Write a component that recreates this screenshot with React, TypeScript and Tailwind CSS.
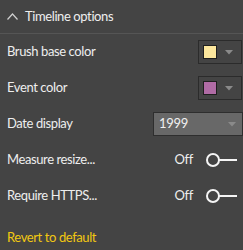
import React from "react";

const font = { fontFamily: 'Lato, "Open Sans", sans-serif' };

function Caret() {
  return (
    <svg width="8" height="5" viewBox="0 0 8 5" className="block">
      <path d="M0 0 H8 L4 4.5 Z" fill="#8a8a8a" />
    </svg>
  );
}

function ColorBox({ color }: { color: string }) {
  return (
    <div className="flex h-[24px] w-[44px] items-center border border-[#2b2b2b] pl-[4px]">
      <div className="h-[14px] w-[14px] border border-[#1e1e1e]" style={{ backgroundColor: color }} />
      <div className="ml-[8px]">
        <Caret />
      </div>
    </div>
  );
}

function Toggle() {
  return (
    <div className="flex items-center gap-[13px]">
      <span className="text-[13px] tracking-[-0.3px] text-[#eeeeee]">Off</span>
      <svg width="31" height="14" viewBox="0 0 31 14" className="block">
        <circle cx="7" cy="7" r="6" fill="none" stroke="#f5f5f5" strokeWidth="2" />
        <line x1="13" y1="7" x2="31" y2="7" stroke="#f5f5f5" strokeWidth="2" />
      </svg>
    </div>
  );
}

function Row({ label, children }: { label: string; children: React.ReactNode }) {
  return (
    <div className="flex h-[36px] items-center justify-between pl-[7px]">
      <span className="text-[13px] tracking-[-0.4px] text-[#eeeeee]">{label}</span>
      {children}
    </div>
  );
}

export default function App() {
  return (
    <div className="h-[250px] w-[243px] overflow-hidden bg-[#444444]" style={font}>
      <div className="flex h-[34px] items-center border-b border-[#555555] pl-[7px]">
        <svg width="11" height="7" viewBox="0 0 11 7" className="block">
          <path d="M0.5 6.5 L5.5 1 L10.5 6.5" fill="none" stroke="#d0d0d0" strokeWidth="1.2" />
        </svg>
        <span className="ml-[7px] text-[13px] tracking-[-0.4px] text-[#eeeeee]">Timeline options</span>
      </div>
      <Row label="Brush base color">
        <div className="pr-[1px]">
          <ColorBox color="#fce79d" />
        </div>
      </Row>
      <Row label="Event color">
        <div className="pr-[1px]">
          <ColorBox color="#b06ba5" />
        </div>
      </Row>
      <Row label="Date display">
        <div className="flex h-[24px] w-[90px] items-center justify-between border border-[#2e2e2e] bg-[#686868] pl-[5px] pr-[6px]">
          <span className="text-[13px] tracking-[-0.3px] text-[#f0f0f0]">1999</span>
          <Caret />
        </div>
      </Row>
      <Row label="Measure resize...">
        <div className="pr-[6px]">
          <Toggle />
        </div>
      </Row>
      <Row label="Require HTTPS...">
        <div className="pr-[6px]">
          <Toggle />
        </div>
      </Row>
      <div className="pl-[7px] pt-[13px] leading-[18px]">
        <span className="text-[13px] tracking-[-0.4px] text-[#f2c811]">Revert to default</span>
      </div>
    </div>
  );
}
